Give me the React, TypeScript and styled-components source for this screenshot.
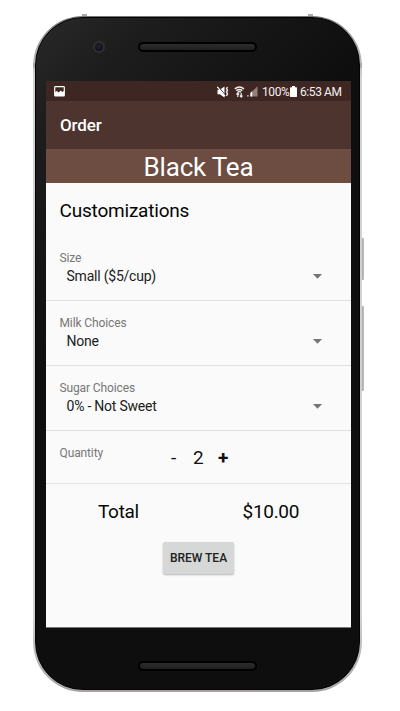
import React from "react";
import styled, { createGlobalStyle } from "styled-components";

const GlobalStyle = createGlobalStyle`
  * { box-sizing: border-box; }
  body { margin: 0; background: #fff; font-family: Roboto, sans-serif; }
`;

const Page = styled.main`
  width: 400px;
  height: 711px;
  padding: 16px 0 0 33px;
  background: #fff;
  overflow: hidden;
`;

const Phone = styled.div`
  position: relative;
  width: 329px;
  height: 676px;
  padding: 1px 2px 2px;
  border-radius: 50px;
  background: linear-gradient(180deg, #77777a 0, #d2d2d2 60px, #d2d2d2 600px, #a5a1a2 100%);
`;

const SideKey = styled.i<{ $top: number; $height: number }>`
  position: absolute;
  left: 328px;
  top: ${(p) => p.$top}px;
  width: 3px;
  height: ${(p) => p.$height}px;
  background: linear-gradient(90deg, #dedede, #aaa8a9 60%, #c9c9c9);
  border-radius: 0 1px 1px 0;
`;

const Antenna = styled.i<{ $left: number; $top: number; $wide?: boolean }>`
  position: absolute;
  left: ${(p) => p.$left}px;
  top: ${(p) => p.$top}px;
  width: ${(p) => (p.$wide ? 5 : 2)}px;
  height: ${(p) => (p.$wide ? 2 : 5)}px;
  background: #aaa;
`;

const Body = styled.div`
  position: relative;
  height: 673px;
  padding: 0 9px 0 10px;
  border: 1px solid #030303;
  border-radius: 48px;
  background: linear-gradient(135deg, #292929 0, #1d1d1d 80px, #0e0e0e 260px);
`;

const Forehead = styled.div`
  height: 63px;
  display: flex;
  align-items: flex-start;
  padding: 23px 0 0 47px;
`;

const Camera = styled.div`
  width: 12px;
  height: 12px;
  border: 2px solid #303032;
  border-radius: 50%;
  background: radial-gradient(circle at 45% 40%, #241f30, #121017 70%);
`;

const Grille = styled.div`
  width: 119px;
  height: 10px;
  margin: 1px 0 0 33px;
  border: 2px solid #000;
  border-radius: 5px;
  background: linear-gradient(#2c2c2c, #202020);
`;

const Chin = styled.div`
  padding: 33px 0 0 92px;
  ${Grille} { margin: 0; }
`;

const Screen = styled.section`
  width: 305px;
  height: 547px;
  background: #fafafa;
  color: #111;
  border-bottom: 1px solid #777;
`;

const StatusBar = styled.div`
  height: 20px;
  display: flex;
  align-items: center;
  padding: 1px 9px 0 8px;
  background: #3e2723;
  color: #f4f0ef;
  font-size: 12px;
  svg { display: block; flex: none; }
`;

const StatusIcons = styled.div`
  display: flex;
  align-items: center;
  margin-left: auto;
`;

const StatusText = styled.span<{ $width: number }>`
  width: ${(p) => p.$width}px;
  line-height: 20px;
  white-space: nowrap;
  letter-spacing: -0.4px;
`;

const AppBar = styled.header`
  height: 48px;
  padding-left: 14px;
  background: #4e342e;
  color: #fff;
  font-size: 17px;
  font-weight: 500;
  line-height: 49px;
  letter-spacing: -0.15px;
`;

const Banner = styled.div`
  height: 34px;
  background: #6d4c41;
  color: #fff;
  font-size: 26px;
  line-height: 37px;
  text-align: center;
  letter-spacing: -0.2px;
`;

const Heading = styled.h2`
  height: 53px;
  margin: 0;
  padding-left: 13.5px;
  font-size: 19px;
  font-weight: 400;
  line-height: 55px;
  letter-spacing: -0.2px;
  color: #050505;
`;

const Field = styled.div`
  height: 65px;
  padding: 14px 29px 0 13.5px;
  border-bottom: 1px solid #dfdfdf;
`;

const Label = styled.div`
  height: 16px;
  color: #777;
  font-size: 12px;
  line-height: 16px;
  letter-spacing: -0.12px;
`;

const Choice = styled.div`
  display: flex;
  justify-content: space-between;
  align-items: center;
  height: 20px;
  padding-left: 7px;
  font-size: 14px;
  line-height: 20px;
  letter-spacing: -0.22px;
  color: #202020;
  svg { display: block; }
`;

const QuantityRow = styled.div`
  display: flex;
  height: 53px;
  padding: 14px 0 0 13.5px;
  border-bottom: 1px solid #e4e4e4;
  ${Label} { width: 111.5px; }
`;

const Stepper = styled.div`
  display: flex;
  height: 26px;
  align-items: center;
  font-size: 19px;
  color: #111;
`;

const StepMark = styled.span<{ $width: number; $bold?: boolean }>`
  width: ${(p) => p.$width}px;
  font-weight: ${(p) => (p.$bold ? 700 : 400)};
  line-height: 26px;
`;

const TotalRow = styled.div`
  display: grid;
  grid-template-columns: 144.5px 1fr;
  height: 57px;
  padding-left: 52px;
  font-size: 19px;
  line-height: 55px;
  letter-spacing: -0.3px;
  color: #080808;
`;

const BrewButton = styled.button`
  display: block;
  width: 71px;
  height: 32px;
  margin: 1px auto 0 117px;
  padding: 0;
  border: 0;
  border-radius: 2px;
  background: #d6d7d7;
  color: #202120;
  box-shadow: 0 1px 2px rgba(0, 0, 0, 0.28);
  font: 500 12px/32px Roboto, sans-serif;
  white-space: nowrap;
`;

const PictureIcon = () => (
  <svg width="11" height="11" viewBox="0 0 11 11">
    <rect x=".7" y=".7" width="9.6" height="9.2" rx=".7" fill="none" stroke="#fff" strokeWidth="1.2" />
    <path d="M1 10V6l2-1 1.5 1.6L7 4.5 8 6l2-1v5Z" fill="#fff" />
  </svg>
);

const MutedIcon = () => (
  <svg width="12" height="12" viewBox="0 0 12 12">
    <path d="M.5 3.8h2.2L7.5.5v11L2.7 8.2H.5Z" fill="#fff" />
    <path d="M1.3.6 8.8 9.6" stroke="#3e2723" strokeWidth="1" />
    <path d="M.4.8 8 10.2" stroke="#fff" strokeWidth="1.1" />
    <path d="m10.5 1-1 1.7 1 1.7-1 1.7 1 1.7-1 2.2" fill="none" stroke="#eee" strokeWidth="1.4" />
  </svg>
);

const WifiIcon = () => (
  <svg width="11" height="12" viewBox="0 0 11 12">
    <path d="M.8 2.9Q5.4-.8 10 2.9M2.3 4.6Q5.4 2.3 8.4 4.6M3.8 6.1Q5.4 5 7 6.1" fill="none" stroke="#eee" strokeWidth="1.4" />
    <path d="M3.8 7v4M2.5 8.5 3.8 7l1.3 1.5M7.2 7v4M5.9 9.6 7.2 11l1.3-1.4" fill="none" stroke="#eee" strokeWidth="1.2" />
  </svg>
);

const SignalIcon = () => (
  <svg width="11" height="11" viewBox="0 0 11 11">
    <path d="M4 10.5V6.5L10.5 .3v10.2Z" fill="#927f7b" />
    <path d="M3.3 10.5V7.1l1.9-1.9v5.3ZM.3 9.3h1.3v1.2H.3Z" fill="#fff" />
  </svg>
);

const BatteryIcon = () => (
  <svg width="7" height="11" viewBox="0 0 7 11">
    <path d="M2 0h3v1.3h1.4q.6 0 .6.6v8.4q0 .7-.6.7H.6q-.6 0-.6-.7V1.9q0-.6.6-.6H2Z" fill="#fff" />
  </svg>
);

const Spacer = styled.span<{ $width: number }>`
  flex: 0 0 ${(p) => p.$width}px;
`;

const fields = [
  { label: "Size", value: "Small ($5/cup)" },
  { label: "Milk Choices", value: "None" },
  { label: "Sugar Choices", value: "0% - Not Sweet" },
];

export default function App() {
  return (
    <Page>
      <GlobalStyle />
      <Phone>
        <Antenna $left={49} $top={-2} $wide />
        <Antenna $left={275} $top={-2} $wide />
        <Antenna $left={0} $top={47} />
        <Antenna $left={327} $top={47} />
        <SideKey $top={222} $height={42} />
        <SideKey $top={290} $height={85} />
        <Body>
          <Forehead>
            <Camera />
            <Grille />
          </Forehead>
          <Screen>
            <StatusBar>
              <PictureIcon />
              <StatusIcons>
                <MutedIcon />
                <Spacer $width={5} />
                <WifiIcon />
                <Spacer $width={2} />
                <SignalIcon />
                <Spacer $width={4} />
                <StatusText $width={28}>100%</StatusText>
                <BatteryIcon />
                <Spacer $width={3} />
                <StatusText $width={42}>6:53 AM</StatusText>
              </StatusIcons>
            </StatusBar>
            <AppBar>Order</AppBar>
            <Banner>Black Tea</Banner>
            <Heading>Customizations</Heading>
            {fields.map((f) => (
              <Field key={f.label}>
                <Label>{f.label}</Label>
                <Choice>
                  <span>{f.value}</span>
                  <svg width="9" height="5" viewBox="0 0 9 5">
                    <path d="M0 0h9L4.5 4.7Z" fill="#757575" />
                  </svg>
                </Choice>
              </Field>
            ))}
            <QuantityRow>
              <Label>Quantity</Label>
              <Stepper>
                <StepMark $width={22}>-</StepMark>
                <StepMark $width={25}>2</StepMark>
                <StepMark $width={14} $bold>+</StepMark>
              </Stepper>
            </QuantityRow>
            <TotalRow>
              <span>Total</span>
              <span>$10.00</span>
            </TotalRow>
            <BrewButton>BREW TEA</BrewButton>
          </Screen>
          <Chin>
            <Grille />
          </Chin>
        </Body>
      </Phone>
    </Page>
  );
}
